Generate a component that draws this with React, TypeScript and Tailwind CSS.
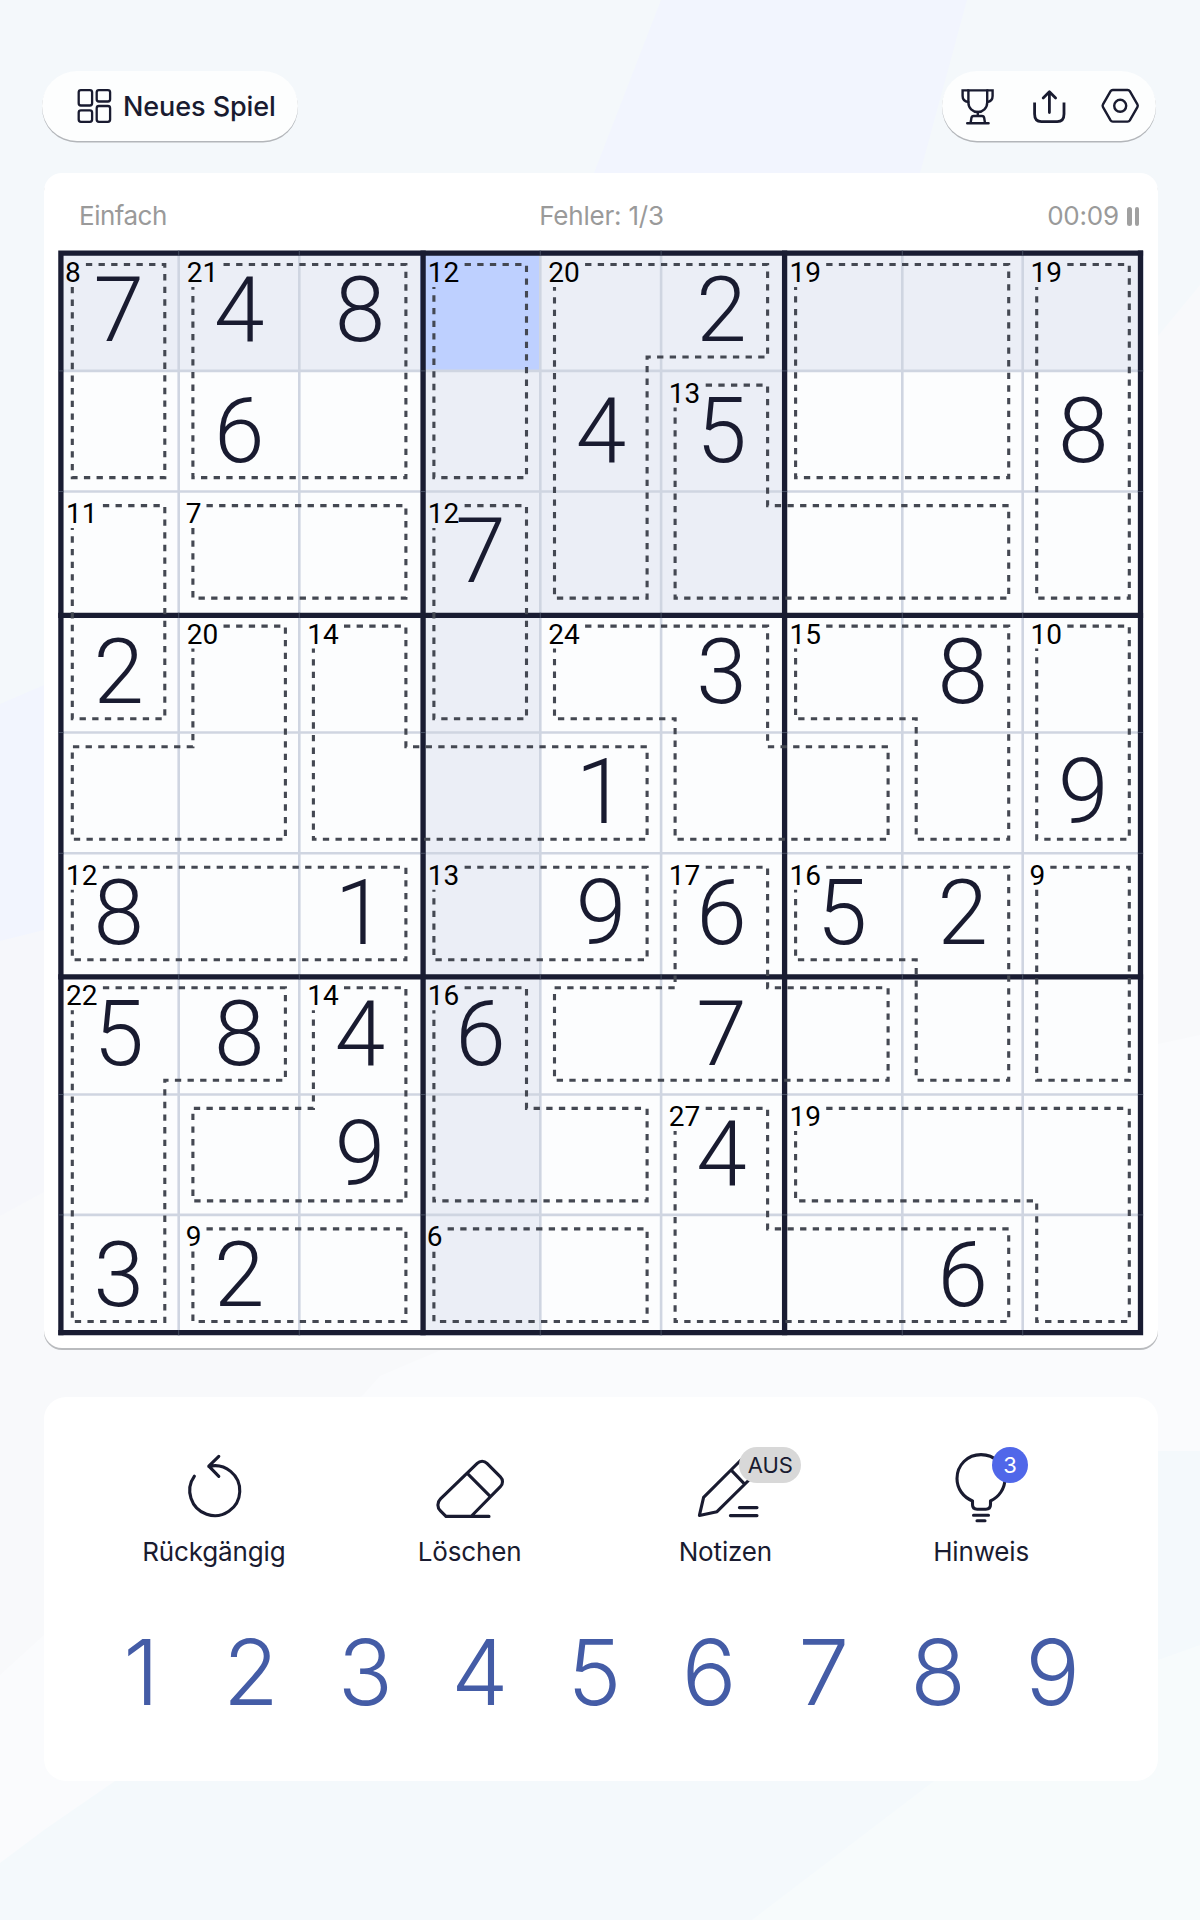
import type { ReactNode } from "react";

const CELL = 120.55;
const INSET = 14;

// 0 = empty cell
const digits = [
  "748002000",
  "060045008",
  "000700000",
  "200003080",
  "000010009",
  "801096520",
  "584607000",
  "009004000",
  "320000060",
];

// one letter per cage
const cageMap = [
  "abbcddeef",
  "abbcdgeef",
  "hiijdgggf",
  "hkljmmoop",
  "kklllmmop",
  "qqqrrsttv",
  "wwxyssstv",
  "wxxyyzAAA",
  "wBBCCzzzA",
];

const cageSums: Record<string, number> = {
  a: 8, b: 21, c: 12, d: 20, e: 19, f: 19, g: 13, h: 11, i: 7, j: 12,
  k: 20, l: 14, m: 24, o: 15, p: 10, q: 12, r: 13, s: 17, t: 16, v: 9,
  w: 22, x: 14, y: 16, z: 27, A: 19, B: 9, C: 6,
};

const selected = { row: 0, col: 3 };

// right, down, left, up
const dirs = [
  [0, 1],
  [1, 0],
  [0, -1],
  [-1, 0],
];

type Cage = { id: string; row: number; col: number; sum: number; path: string };

// walks clockwise round a cage, starting behind its sum label
function tracePath(id: string, row: number, col: number, sum: number) {
  const has = (r: number, c: number) => cageMap[r]?.[c] === id;
  const corner = (r: number, c: number, a: number, b: number) => {
    const bottom = a === 1 || b === 1;
    const right = a === 0 || b === 0;
    const x = c * CELL + (right ? CELL - INSET : INSET);
    const y = r * CELL + (bottom ? CELL - INSET : INSET);
    return `${x.toFixed(1)} ${y.toFixed(1)}`;
  };
  const startX = col * CELL + (sum > 9 ? 44.6 : 27.6);
  let path = `M${startX.toFixed(1)} ${(row * CELL + INSET).toFixed(1)}`;
  let r = row;
  let c = col;
  let d = 0;
  for (let i = 0; i < 60; i++) {
    const left = (d + 3) % 4;
    const fr = r + dirs[d][0];
    const fc = c + dirs[d][1];
    if (!has(fr, fc)) {
      if (d === 3 && r === row && c === col) break;
      path += `L${corner(r, c, d, left)}`;
      d = (d + 1) % 4;
    } else if (has(fr + dirs[left][0], fc + dirs[left][1])) {
      path += `L${corner(fr, fc, (d + 2) % 4, left)}`;
      r = fr + dirs[left][0];
      c = fc + dirs[left][1];
      d = left;
    } else {
      r = fr;
      c = fc;
    }
  }
  return path + `V${(row * CELL + 36.5).toFixed(1)}`;
}

const cages: Cage[] = [];
cageMap.forEach((line, row) =>
  [...line].forEach((id, col) => {
    if (cages.some((cage) => cage.id === id)) return;
    const sum = cageSums[id];
    cages.push({ id, row, col, sum, path: tracePath(id, row, col, sum) });
  })
);

const thinLines = [120.4, 241, 482, 602.8, 844, 964.4];
const thickLines = [2.6, 364.8, 726.3, 1082.2];

function cellColor(row: number, col: number) {
  if (row === selected.row && col === selected.col) return "bg-[#bed0ff]";
  const sameBox =
    Math.floor(row / 3) === Math.floor(selected.row / 3) &&
    Math.floor(col / 3) === Math.floor(selected.col / 3);
  if (row === selected.row || col === selected.col || sameBox) return "bg-[#ebeef6]";
  return "bg-[#fcfdfe]";
}

function Backdrop() {
  return (
    <svg className="absolute inset-0" width="1200" height="1920" viewBox="0 0 1200 1920">
      <rect width="1200" height="1920" fill="#f4f8fb" />
      <path d="M0 941L44 930L920 400L1158 336L1200 285V1920H0Z" fill="#f8f9fb" />
      <path d="M0 941L44 930L600 700V900L44 1192L0 1216Z" fill="#f6f7fb" />
      <path d="M661 0H967L920 173L400 800L44 930L0 941V704L44 685L594 173Z" fill="#f2f5fe" />
      <path d="M0 1675L44 1635L363 1395L380 1376L1158 1044L1200 1035V1920H0Z" fill="#fafbfd" />
      <path d="M0 1863L44 1830L115 1781L600 1451H1200V1920H0Z" fill="#f4f9fc" />
      <path d="M752 1920L934 1781L1158 1660L1200 1645V1920Z" fill="#f7fbfc" />
    </svg>
  );
}

function TopBar() {
  return (
    <header className="flex h-[70px] justify-between pr-0.5">
      <button className="flex w-[256px] items-center rounded-full bg-[#fdfefe] pl-[34px] shadow-[0_1.5px_0_#b3b6ba]">
        <svg width="36" height="36" viewBox="0 0 36 36" fill="none" stroke="#191b30" strokeWidth="2.3">
          <rect x="2.7" y="2.1" width="13.4" height="15.4" rx="2.2" />
          <rect x="20.7" y="2.1" width="13.4" height="11.4" rx="2.2" />
          <rect x="2.7" y="22.4" width="13.4" height="11.4" rx="2.2" />
          <rect x="20.7" y="18" width="13.4" height="15.8" rx="2.2" />
        </svg>
        <span className="mt-0.5 ml-[11px] text-[27px] font-medium tracking-[-0.08px] whitespace-nowrap">
          Neues Spiel
        </span>
      </button>
      <div className="flex w-[214px] items-center rounded-full bg-[#fdfefe] pl-[18px] shadow-[0_1.5px_0_#b3b6ba]">
        <svg width="36" height="38" viewBox="0 0 36 38" fill="none" stroke="#191b30" strokeWidth="2.4" strokeLinecap="round">
          <path d="M8.4 3.4H27.2V15.5C27.2 21 23 25 17.8 25S8.4 21 8.4 15.5Z" />
          <path d="M8.4 3.4H2.6V9C2.6 12.5 4.5 14.5 8.4 15M27.2 3.4H32.6V9C32.6 12.5 31.2 14.5 27.2 15" />
          <path d="M17.8 25V29M10.6 36L11.4 31C11.6 29.7 12.4 29 13.6 29H22C23.2 29 24 29.7 24.2 31L25 36M7.2 36.2H28.6" />
        </svg>
        <svg className="ml-9" width="36" height="38" viewBox="0 0 36 38" fill="none" stroke="#191b30" strokeWidth="2.8" strokeLinecap="round" strokeLinejoin="round">
          <path d="M2.6 15.6V27C2.6 32 5 34.6 9.4 34.6H25.2C29.6 34.6 32 32 32 27V15.6" strokeLinecap="butt" />
          <path d="M17.4 25.6V5M11.2 11L17.4 4.8L23.6 11" />
        </svg>
        <svg className="ml-[32px]" width="40" height="38" viewBox="0 0 40 38" fill="none" stroke="#191b30" strokeWidth="2.4" strokeLinejoin="round">
          <path d="M12.8 3H27.6C28.6 3 29.3 3.4 29.8 4.2L37.4 17.4C37.9 18.3 37.9 19.3 37.4 20.2L29.8 33.4C29.3 34.2 28.6 34.6 27.6 34.6H12.8C11.8 34.6 11.1 34.2 10.6 33.4L3 20.2C2.5 19.3 2.5 18.3 3 17.4L10.6 4.2C11.1 3.4 11.8 3 12.8 3Z" />
          <circle cx="20.2" cy="18.8" r="6" />
        </svg>
      </div>
    </header>
  );
}

function Board() {
  return (
    <div className="relative mx-auto h-[1085px] w-[1085px]">
      <div className="grid h-full grid-cols-9 grid-rows-9">
        {digits.map((line, row) =>
          [...line].map((digit, col) => (
            <div
              key={`${row}-${col}`}
              className={`flex items-center justify-center pb-px font-['Roboto'] text-[91px] leading-none font-light ${cellColor(row, col)}`}
            >
              {digit !== "0" && digit}
            </div>
          ))
        )}
      </div>
      <svg className="absolute inset-0" width="1085" height="1085" viewBox="0.7 0.5 1085 1085" fill="none" overflow="visible">
        {thinLines.map((p) => (
          <path key={p} d={`M${p} 0V1085M0 ${p}H1085`} stroke="#cfd5e1" strokeWidth="2.6" />
        ))}
        {thickLines.map((p) => (
          <path key={p} d={`M${p} 0V1084.8M0 ${p}H1084.8`} stroke="#191c32" strokeWidth="5.3" />
        ))}
        {/* faint cell joints on the thick lines */}
        {thinLines.map((p) =>
          thickLines.map((q) => (
            <path
              key={`${p}-${q}`}
              d={`M${p} ${q - 2.6}v5.2M${q - 2.6} ${p}h5.2`}
              stroke="#566074"
              strokeOpacity="0.7"
            />
          ))
        )}
        {cages.map((cage) => (
          <path key={cage.id} d={cage.path} stroke="#444852" strokeWidth="3.1" strokeDasharray="6.32" />
        ))}
      </svg>
      {cages.map((cage) => (
        <span
          key={cage.id}
          className="absolute font-['Roboto'] text-[28px] leading-none text-black"
          style={{ left: cage.col * CELL + (cage.sum > 9 ? 7.6 : 6.6), top: cage.row * CELL + 8 }}
        >
          {cage.sum}
        </span>
      ))}
    </div>
  );
}

function GameCard() {
  return (
    <section className="mt-8 h-[1175px] rounded-[18px] bg-white pt-7 shadow-[0_2px_0_#b9bbbe]">
      <div className="mb-5 grid h-[30px] grid-cols-3 items-center pr-[19px] pl-[35px] text-[26px] leading-none text-[#9a9a9a]">
        <span className="tracking-[-0.5px]">Einfach</span>
        <span className="pr-[15px] text-center tracking-[-0.2px]">Fehler: 1/3</span>
        <span className="flex items-center justify-end gap-2 tracking-[-0.2px]">
          00:09
          <span className="flex gap-[3px]">
            <span className="h-[19px] w-[4.5px] rounded-sm bg-[#a0a0a0]" />
            <span className="h-[19px] w-[4.5px] rounded-sm bg-[#a0a0a0]" />
          </span>
        </span>
      </div>
      <Board />
    </section>
  );
}

function Tool({ label, children }: { label: string; children: ReactNode }) {
  return (
    <button className="flex flex-col items-center">
      <span className="relative h-20 w-20">{children}</span>
      <span className="mt-3 text-[26px] leading-8 tracking-[-0.15px]">{label}</span>
    </button>
  );
}

function Icon({ children }: { children: ReactNode }) {
  return (
    <svg width="80" height="80" viewBox="0 0 80 80" fill="none" stroke="#191b30" strokeWidth="3.1" strokeLinecap="round" strokeLinejoin="round">
      {children}
    </svg>
  );
}

function Controls() {
  return (
    <section className="mt-[49px] h-[384px] rounded-[22px] bg-white pt-[47px]">
      <div className="grid grid-cols-4 pr-[49px] pl-[42px]">
        <Tool label="Rückgängig">
          <Icon>
            <path d="M20.4 32.2A25 25 0 1 0 34.8 22.4M44.8 12.4L34.8 22.2L44.8 32.4" />
          </Icon>
        </Tool>
        <Tool label="Löschen">
          <Icon>
            <path d="M16 72.4L10.5 66.9C7 63.4 7 58.4 10.5 54.9L47.2 19.4C50 16.6 54.2 16.6 57 19.4L70.4 32.8C73.2 35.6 73.2 39.8 70.4 42.6L41.5 72M37.8 29.9L59.2 51.4M16 72.4H59" />
          </Icon>
        </Tool>
        <Tool label="Notizen">
          <Icon>
            <path d="M56 16L18.6 53.4L14.4 71.4L32 67.7L64 36M46.4 26.4L59.4 39.9M54.4 63.6H72M45.4 71.6H72" />
          </Icon>
          <span className="absolute top-[3px] left-[54px] flex h-9 w-[62px] items-center justify-center rounded-full bg-[#d8d8d8] text-[22px]">
            AUS
          </span>
        </Tool>
        <Tool label="Hinweis">
          <Icon>
            <path d="M31.5 57C22 53 16 44.5 16 34.5C16 21 26.6 10.6 40 10.6S64 21 64 34.5C64 44.5 58 53 49.5 57V60.5C49.5 63.5 47.7 65.2 44.8 65.2H36.2C33.3 65.2 31.5 63.5 31.5 60.5V57M32.5 71.2H47.5M36 76.8H44" />
          </Icon>
          <span className="absolute top-[3px] left-[51px] flex size-9 items-center justify-center rounded-full bg-[#5067e9] text-[22px] text-white">
            3
          </span>
        </Tool>
      </div>
      <div className="mt-[52px] grid grid-cols-9 pr-12 pl-[35px] text-center text-[91px] leading-[104px] font-light text-[#445ca6]">
        {[1, 2, 3, 4, 5, 6, 7, 8, 9].map((n) => (
          <span key={n} className={n === 1 ? "pl-2.5" : undefined}>
            {n}
          </span>
        ))}
      </div>
    </section>
  );
}

export default function App() {
  return (
    <main className="relative h-[1920px] w-[1200px] overflow-hidden font-['Inter',sans-serif] text-[#191b30]">
      <Backdrop />
      <div className="relative px-[42px] pt-[71px]">
        <TopBar />
        <div className="ml-0.5">
          <GameCard />
          <Controls />
        </div>
      </div>
    </main>
  );
}
